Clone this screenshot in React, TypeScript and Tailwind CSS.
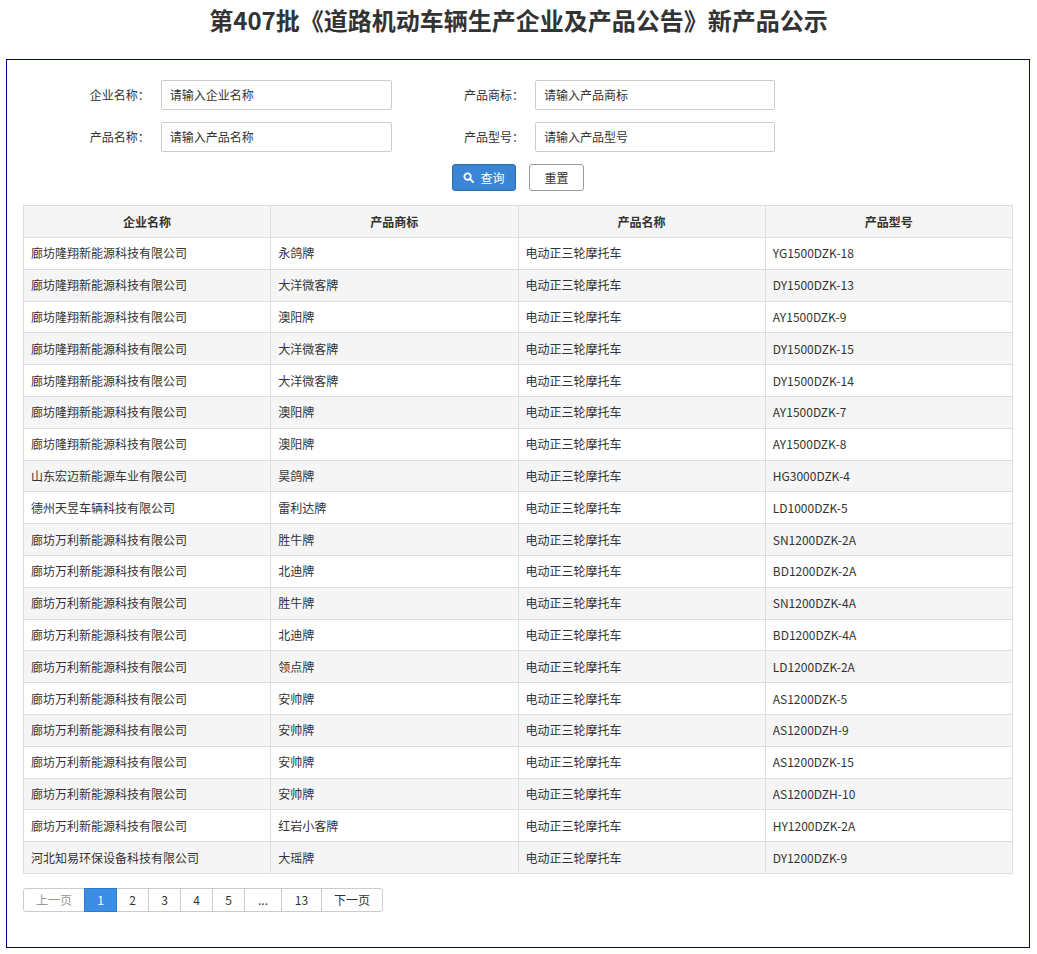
const rows: [string, string, string, string][] = [
  ['廊坊隆翔新能源科技有限公司', '永鸽牌', '电动正三轮摩托车', 'YG1500DZK-18'],
  ['廊坊隆翔新能源科技有限公司', '大洋微客牌', '电动正三轮摩托车', 'DY1500DZK-13'],
  ['廊坊隆翔新能源科技有限公司', '澳阳牌', '电动正三轮摩托车', 'AY1500DZK-9'],
  ['廊坊隆翔新能源科技有限公司', '大洋微客牌', '电动正三轮摩托车', 'DY1500DZK-15'],
  ['廊坊隆翔新能源科技有限公司', '大洋微客牌', '电动正三轮摩托车', 'DY1500DZK-14'],
  ['廊坊隆翔新能源科技有限公司', '澳阳牌', '电动正三轮摩托车', 'AY1500DZK-7'],
  ['廊坊隆翔新能源科技有限公司', '澳阳牌', '电动正三轮摩托车', 'AY1500DZK-8'],
  ['山东宏迈新能源车业有限公司', '昊鸽牌', '电动正三轮摩托车', 'HG3000DZK-4'],
  ['德州天昱车辆科技有限公司', '雷利达牌', '电动正三轮摩托车', 'LD1000DZK-5'],
  ['廊坊万利新能源科技有限公司', '胜牛牌', '电动正三轮摩托车', 'SN1200DZK-2A'],
  ['廊坊万利新能源科技有限公司', '北迪牌', '电动正三轮摩托车', 'BD1200DZK-2A'],
  ['廊坊万利新能源科技有限公司', '胜牛牌', '电动正三轮摩托车', 'SN1200DZK-4A'],
  ['廊坊万利新能源科技有限公司', '北迪牌', '电动正三轮摩托车', 'BD1200DZK-4A'],
  ['廊坊万利新能源科技有限公司', '领点牌', '电动正三轮摩托车', 'LD1200DZK-2A'],
  ['廊坊万利新能源科技有限公司', '安帅牌', '电动正三轮摩托车', 'AS1200DZK-5'],
  ['廊坊万利新能源科技有限公司', '安帅牌', '电动正三轮摩托车', 'AS1200DZH-9'],
  ['廊坊万利新能源科技有限公司', '安帅牌', '电动正三轮摩托车', 'AS1200DZK-15'],
  ['廊坊万利新能源科技有限公司', '安帅牌', '电动正三轮摩托车', 'AS1200DZH-10'],
  ['廊坊万利新能源科技有限公司', '红岩小客牌', '电动正三轮摩托车', 'HY1200DZK-2A'],
  ['河北知易环保设备科技有限公司', '大瑶牌', '电动正三轮摩托车', 'DY1200DZK-9'],
];

const font = { fontFamily: '"Microsoft YaHei", "Noto Sans CJK SC", "Noto Sans", sans-serif' };

function Field({ label, ph }: { label: string; ph: string }) {
  return (
    <div className="flex items-center">
      <span className="w-[136px] pr-[4px] text-right text-[12px] text-[#333]">{label}：</span>
      <div className="ml-[7px] flex h-[30px] w-[240px] items-center rounded-[2px] border border-[#ccc] px-[8px] text-[12px] text-[#333]">
        {ph}
      </div>
    </div>
  );
}

export default function App() {
  const pages = ['上一页', '1', '2', '3', '4', '5', '...', '13', '下一页'];
  const widths = [62, 33, 33, 33, 33, 33, 38, 41, 62];
  return (
    <div className="min-h-[954px] bg-white" style={font}>
      <h1 className="pt-[4px] text-center text-[24px] font-bold leading-[32px] text-[#333]">
        第407批《道路机动车辆生产企业及产品公告》新产品公示
      </h1>
      <div className="mx-[6px] mt-[23px] h-[889px] w-[1024px] border border-[#000080] px-[16px] pt-[20px]">
        <div className="flex flex-col gap-[12px]">
          <div className="flex">
            <div className="w-[369px]"><Field label="企业名称" ph="请输入企业名称" /></div>
            <Field label="产品商标" ph="请输入产品商标" />
          </div>
          <div className="flex">
            <div className="w-[369px]"><Field label="产品名称" ph="请输入产品名称" /></div>
            <Field label="产品型号" ph="请输入产品型号" />
          </div>
        </div>
        <div className="mt-[12px] flex justify-center gap-[13px]">
          <button className="flex h-[27px] w-[64px] items-center justify-center gap-[6px] rounded-[3px] border border-[#2e6da4] bg-[#3a85d6] text-[12px] text-white">
            <svg width="11" height="11" viewBox="0 0 12 12"><circle cx="5" cy="5" r="3.5" fill="none" stroke="white" strokeWidth="2" /><path d="M7.5 7.5L11 11" stroke="white" strokeWidth="2.2" strokeLinecap="round" /></svg>
            查询
          </button>
          <button className="h-[27px] w-[55px] rounded-[3px] border border-[#999] bg-white text-[12px] text-[#333]">重置</button>
        </div>
        <table className="mt-[14px] w-[990px] border-collapse text-[12px] text-[#333]">
          <thead>
            <tr className="h-[32px] bg-[#f5f5f5]">
              {['企业名称', '产品商标', '产品名称', '产品型号'].map((h) => (
                <th key={h} className="w-1/4 border border-[#ddd] font-bold">{h}</th>
              ))}
            </tr>
          </thead>
          <tbody>
            {rows.map((r, i) => (
              <tr key={i} className={`h-[31.8px] ${i % 2 ? 'bg-[#f5f5f5]' : 'bg-white'}`}>
                {r.map((c, j) => (
                  <td key={j} className="border border-[#ddd] px-[7px]">{c}</td>
                ))}
              </tr>
            ))}
          </tbody>
        </table>
        <div className="mt-[14px] flex text-[12px]">
          {pages.map((p, i) => (
            <div
              key={p}
              style={{ width: widths[i] }}
              className={`-ml-px flex h-[24px] items-center justify-center border first:ml-0 ${
                p === '1' ? 'z-10 border-[#2a7ad6] bg-[#3a8ee6] text-white' : p === '上一页' ? 'border-[#ccc] text-[#999]' : 'border-[#ccc] text-[#333]'
              } ${i === 0 ? 'rounded-l-[3px]' : ''} ${i === pages.length - 1 ? 'rounded-r-[3px]' : ''}`}
            >
              {p}
            </div>
          ))}
        </div>
      </div>
    </div>
  );
}
